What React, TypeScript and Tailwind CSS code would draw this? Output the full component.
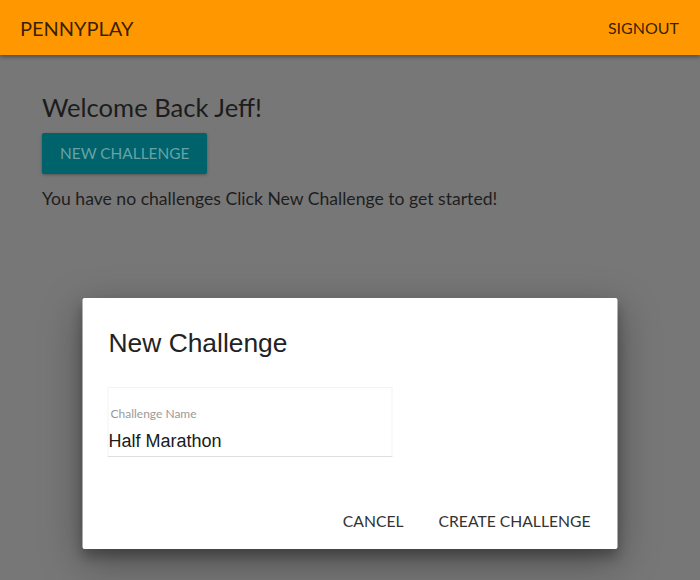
import React from "react";

const lato = "font-['Lato','Open_Sans',sans-serif]";
const arial = "font-['Liberation_Sans',Arial,sans-serif]";

const App = () => {
  return (
    <div className={`relative min-h-[580px] w-full bg-[#777777] ${lato}`}>
      {/* app bar */}
      <header className="relative z-20 flex h-[55px] items-center justify-between bg-[#ff9800] pl-5 pr-[21px] shadow-[0_2px_4px_rgba(0,0,0,0.35)]">
        <span className="text-[20px] text-black/80">PENNYPLAY</span>
        <span className="text-[16px] text-black/80">SIGNOUT</span>
      </header>

      {/* dimmed page content */}
      <main className="px-[42px] pt-[37px]">
        <h1 className="text-[25.6px] leading-[31px] text-[#1c1c1c]">
          Welcome Back Jeff!
        </h1>
        <button className="mt-[10px] h-[41px] rounded-[2px] bg-[#00626b] px-[18px] text-[15.4px] text-[#65a3a7] shadow-[0_1px_3px_rgba(0,0,0,0.3)]">
          NEW CHALLENGE
        </button>
        <p className="mt-[13px] text-[17.6px] leading-6 text-[#1e1e1e]">
          You have no challenges Click New Challenge to get started!
        </p>
      </main>

      {/* dialog */}
      <div className="absolute left-1/2 top-[298px] z-30 w-[535px] -translate-x-1/2 rounded-[2px] bg-white shadow-[0_12px_40px_rgba(0,0,0,0.35),0_8px_12px_rgba(0,0,0,0.25)]">
        <div className="px-[25px] pt-[29px]">
          <h2 className={`${arial} ml-px text-[26.4px] leading-8 text-[#222]`}>
            New Challenge
          </h2>
          <div className="mt-[28px] flex h-[70px] w-[285px] flex-col border border-[#f4f4f4] border-b-[#dedede]">
            <label className="ml-[2px] mt-[19px] text-[12px] leading-[14px] text-[#9a9a9a]">
              Challenge Name
            </label>
            <input
              className={`${arial} mt-[9px] h-[22px] bg-transparent text-[18px] leading-[22px] text-[#1a1a1a] outline-none`}
              defaultValue="Half Marathon"
            />
          </div>
        </div>
        <div className="mt-[54px] flex justify-end gap-[35px] pb-[18px] pr-[27px]">
          <button className="text-[15.7px] leading-5 text-[#333]">CANCEL</button>
          <button className="text-[15.7px] leading-5 text-[#333]">
            CREATE CHALLENGE
          </button>
        </div>
      </div>
    </div>
  );
};

export default App;
